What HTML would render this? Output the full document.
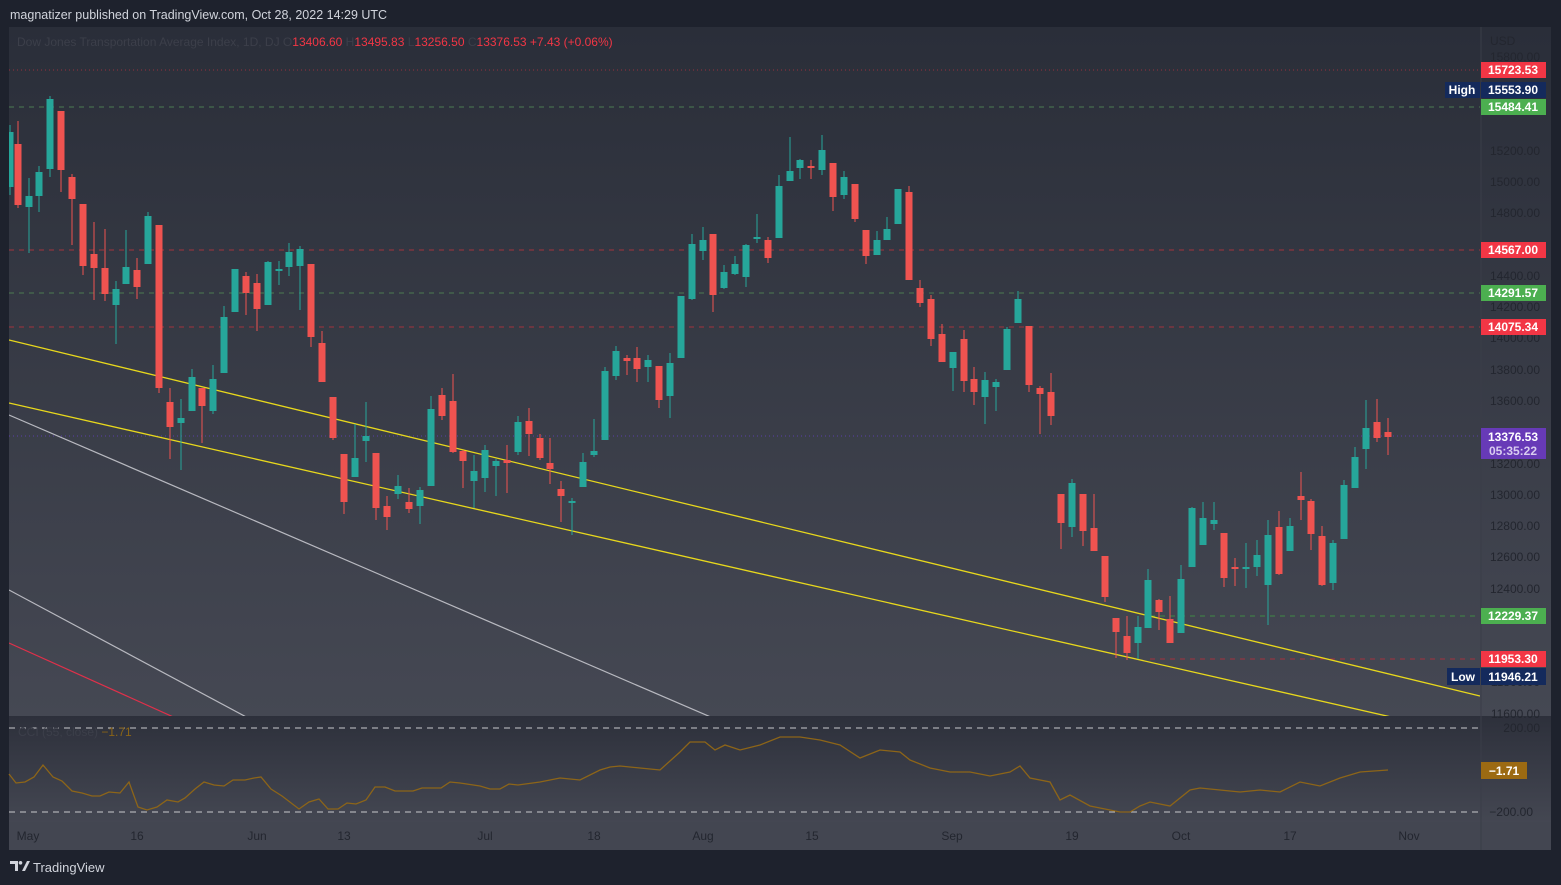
<!DOCTYPE html>
<html><head><meta charset="utf-8"><style>
html,body{margin:0;padding:0;background:#1e222d;width:1561px;height:885px;overflow:hidden;font-family:"Liberation Sans",sans-serif}
svg{position:absolute;left:0;top:0}
</style></head><body>
<svg id="s" width="1561" height="885" xmlns="http://www.w3.org/2000/svg" font-family="Liberation Sans, sans-serif">
<defs>
<linearGradient id="g1" x1="0" y1="0" x2="0" y2="1"><stop offset="0" stop-color="#2a2e39"/><stop offset="1" stop-color="#454853"/></linearGradient>
<linearGradient id="g2" x1="0" y1="0" x2="0" y2="1"><stop offset="0" stop-color="#2d303b"/><stop offset="1" stop-color="#444752"/></linearGradient>
<clipPath id="cp"><rect x="9" y="27" width="1471" height="689"/></clipPath>
</defs>
<rect x="0" y="0" width="1561" height="885" fill="#1e222d"/>
<rect x="9" y="27" width="1542" height="689" fill="url(#g1)"/>
<rect x="9" y="716" width="1542" height="107" fill="url(#g2)"/>
<rect x="9" y="822" width="1542" height="28" fill="#434651"/>
<line x1="1481" y1="27" x2="1481" y2="850" stroke="#3a3d48" stroke-width="1"/>
<text x="10" y="19" font-size="12.5" fill="#d1d4dc">magnatizer published on TradingView.com, Oct 28, 2022 14:29 UTC</text>
<text x="17" y="46" font-size="12" fill="#3c3f4a">Dow Jones Transportation Average Index, 1D, DJ  <tspan fill="#3c3f4a">O</tspan><tspan fill="#f23645">13406.60</tspan>  <tspan fill="#3c3f4a">H</tspan><tspan fill="#f23645">13495.83</tspan>  <tspan fill="#3c3f4a">L</tspan><tspan fill="#f23645">13256.50</tspan>  <tspan fill="#3c3f4a">C</tspan><tspan fill="#f23645">13376.53</tspan>  <tspan fill="#f23645">+7.43 (+0.06%)</tspan></text>
<g id="axis" font-size="12" fill="#23262f" text-anchor="end"></g>
<g clip-path="url(#cp)" id="chart">
<line x1="9" y1="70" x2="1480" y2="70" stroke="#b2313f" stroke-dasharray="1,3" opacity=".8"/>
<line x1="9" y1="107" x2="1480" y2="107" stroke="#4c7a52" stroke-dasharray="5,5"/>
<line x1="9" y1="250" x2="1480" y2="250" stroke="#a3333d" stroke-dasharray="5,5"/>
<line x1="9" y1="293" x2="1480" y2="293" stroke="#4c7a52" stroke-dasharray="5,5"/>
<line x1="9" y1="327" x2="1480" y2="327" stroke="#a3333d" stroke-dasharray="5,5"/>
<line x1="9" y1="436" x2="1480" y2="436" stroke="#5b3fa8" stroke-dasharray="1,3"/>
<line x1="1150" y1="616" x2="1480" y2="616" stroke="#3f8a45" stroke-dasharray="5,5"/>
<line x1="1150" y1="659" x2="1480" y2="659" stroke="#a3333d" stroke-dasharray="5,5"/>
<line x1="9" y1="340" x2="1480" y2="696" stroke="#e8d81c" stroke-width="1.3"/>
<line x1="9" y1="403" x2="1400" y2="719" stroke="#e8d81c" stroke-width="1.3"/>
<line x1="9" y1="415" x2="720" y2="721" stroke="#b8b9c0" stroke-width="1.2"/>
<line x1="9" y1="590" x2="250" y2="719" stroke="#b8b9c0" stroke-width="1.2"/>
<line x1="9" y1="643" x2="180" y2="720" stroke="#e0304a" stroke-width="1.2"/>
<g id="candles"></g>
</g>
<line x1="9" y1="728" x2="1480" y2="728" stroke="#c8c9cd" stroke-dasharray="6,5"/>
<line x1="9" y1="812" x2="1480" y2="812" stroke="#c8c9cd" stroke-dasharray="6,5"/>
<text x="18" y="736" font-size="12" fill="#3c3f4a">CCI (55, close)  <tspan fill="#8a6417">−1.71</tspan></text>
<polyline id="cci" fill="none" stroke="#8d6518" stroke-width="1.3"/>
<text x="1540" y="732" font-size="12" fill="#23262f" text-anchor="end">200.00</text>
<text x="1533" y="816" font-size="12" fill="#23262f" text-anchor="end">−200.00</text>
<rect x="1481" y="762" width="46" height="17" fill="#9c6a12"/>
<text x="1504" y="775" font-size="12" fill="#fff" text-anchor="middle" font-weight="bold">−1.71</text>
<g font-size="12" fill="#23262f" text-anchor="middle">
<text x="28" y="840">May</text><text x="137" y="840">16</text><text x="257" y="840">Jun</text><text x="344" y="840">13</text><text x="485" y="840">Jul</text><text x="594" y="840">18</text><text x="703" y="840">Aug</text><text x="812" y="840">15</text><text x="952" y="840">Sep</text><text x="1072" y="840">19</text><text x="1181" y="840">Oct</text><text x="1290" y="840">17</text><text x="1409" y="840">Nov</text>
</g>
<text x="1490" y="45" font-size="12" fill="#23262f">USD</text>
<g font-size="12" font-weight="bold" fill="#fff" text-anchor="middle">
<rect x="1481" y="62" width="65" height="16" fill="#f23645"/><text x="1513" y="74">15723.53</text>
<rect x="1445" y="82" width="35" height="16" fill="#142a5c"/><text x="1462" y="94">High</text>
<rect x="1481" y="82" width="65" height="16" fill="#142a5c"/><text x="1513" y="94">15553.90</text>
<rect x="1481" y="99" width="65" height="16" fill="#4caf50"/><text x="1513" y="111">15484.41</text>
<rect x="1481" y="242" width="65" height="16" fill="#f23645"/><text x="1513" y="254">14567.00</text>
<rect x="1481" y="285" width="65" height="16" fill="#4caf50"/><text x="1513" y="297">14291.57</text>
<rect x="1481" y="319" width="65" height="16" fill="#f23645"/><text x="1513" y="331">14075.34</text>
<rect x="1481" y="428" width="65" height="31" fill="#673ab7"/><text x="1513" y="441">13376.53</text><text x="1513" y="455" fill="#d9cdf0">05:35:22</text>
<rect x="1481" y="608" width="65" height="16" fill="#4caf50"/><text x="1513" y="620">12229.37</text>
<rect x="1481" y="651" width="65" height="16" fill="#f23645"/><text x="1513" y="663">11953.30</text>
<rect x="1447" y="668" width="33" height="17" fill="#142a5c"/><text x="1463" y="681">Low</text>
<rect x="1481" y="668" width="65" height="17" fill="#142a5c"/><text x="1513" y="681">11946.21</text>
</g>
<g transform="translate(10,861)" fill="#d1d4dc">
<path d="M0 0h8v10h-3v-7h-5z"/><rect x="0" y="0" width="8" height="3"/><circle cx="10.5" cy="1.8" r="1.8"/><path d="M12 10l5-10h3l-5 10z"/>
</g>
<text x="33" y="872" font-size="13" fill="#d1d4dc">TradingView</text>
</svg>
<script>
var ns="http://www.w3.org/2000/svg";
function el(p,t,a){var e=document.createElementNS(ns,t);for(var k in a)e.setAttribute(k,a[k]);p.appendChild(e);return e;}
var ax=document.getElementById('axis');
[[15800,57],[15200,151],[15000,182],[14800,213],[14400,276],[14200,307],[14000,338],[13800,370],[13600,401],[13200,464],[13000,495],[12800,526],[12600,557],[12400,589],[11800,682],[11600,714]].forEach(function(a){var t=el(ax,'text',{x:1540,y:a[1]+4});t.textContent=a[0].toFixed(2);});
var C=[[10,'g',132,187,125,195],[18,'r',144,205,121,208],[29,'g',196,207,178,253],[39,'g',172,196,166,212],[50,'g',99,169,96,177],[61,'r',111,170,111,192],[72,'r',177,199,174,245],[83,'r',204,266,204,275],[94,'r',254,268,222,300],[105,'r',268,294,229,301],[116,'g',289,305,281,344],[126,'g',267,284,230,284],[137,'r',270,287,258,299],[148,'g',216,264,212,264],[159,'r',225,388,225,393],[170,'r',402,427,388,459],[181,'g',418,423,399,470],[192,'g',377,411,369,411],[202,'r',388,406,388,443],[213,'g',379,411,365,414],[224,'g',317,373,306,373],[235,'g',269,312,269,312],[246,'r',276,293,272,315],[257,'r',283,309,274,331],[268,'g',262,305,261,305],[279,'g',269,271,261,285],[289,'g',252,267,243,276],[300,'g',249,266,246,310],[311,'r',264,337,264,347],[322,'r',343,382,331,382],[333,'r',397,438,397,440],[344,'r',454,502,454,514],[355,'g',458,477,424,477],[366,'g',436,441,402,462],[376,'r',453,508,453,520],[387,'r',506,517,496,530],[398,'g',486,494,475,499],[409,'r',502,509,488,513],[420,'g',490,506,487,524],[431,'g',409,486,396,486],[442,'r',395,416,388,420],[453,'r',401,452,374,453],[463,'r',451,461,450,488],[474,'g',471,481,455,508],[485,'g',450,478,445,492],[496,'g',461,466,459,496],[507,'r',460,463,445,493],[518,'g',422,452,416,455],[529,'r',421,434,408,456],[540,'r',438,458,434,460],[550,'r',463,469,438,484],[561,'r',489,496,481,522],[572,'g',501,503,498,535],[583,'g',462,487,453,487],[594,'g',451,455,419,457],[605,'g',371,440,367,440],[616,'g',351,376,346,380],[627,'r',358,361,355,375],[637,'r',358,369,347,382],[648,'g',360,367,355,382],[659,'r',366,400,366,408],[670,'g',363,396,353,418],[681,'g',296,358,296,358],[692,'g',244,299,234,300],[703,'g',240,251,227,260],[713,'r',234,295,234,312],[724,'g',272,288,265,289],[735,'g',264,274,256,275],[746,'g',245,277,244,287],[757,'g',237,238,214,243],[768,'r',240,258,237,263],[779,'g',186,238,175,238],[790,'g',171,181,137,181],[800,'g',160,168,159,179],[811,'r',166,168,160,179],[822,'g',150,170,135,175],[833,'r',163,197,163,211],[844,'g',177,195,171,199],[855,'r',184,219,184,222],[866,'r',230,256,230,264],[877,'g',240,255,231,255],[887,'g',229,240,217,240],[898,'g',189,224,189,224],[909,'r',192,280,186,280],[920,'r',288,303,280,307],[931,'r',299,339,295,346],[942,'r',334,362,324,362],[953,'g',352,368,352,391],[964,'r',339,381,330,392],[974,'r',379,392,367,405],[985,'g',380,397,372,424],[996,'g',382,387,379,411],[1007,'g',329,370,327,370],[1018,'g',299,323,291,323],[1029,'r',326,385,326,392],[1040,'r',388,394,386,434],[1051,'r',392,416,373,425],[1061,'r',494,523,494,549],[1072,'g',483,527,479,537],[1083,'r',494,531,494,546],[1094,'r',528,551,494,551],[1105,'r',556,597,556,602],[1116,'r',618,632,618,658],[1127,'r',636,653,616,660],[1138,'g',627,643,616,659],[1148,'g',580,628,569,628],[1159,'r',600,612,599,630],[1170,'r',619,643,596,643],[1181,'g',579,633,565,633],[1192,'g',508,567,507,567],[1203,'g',518,545,502,545],[1214,'g',520,524,502,530],[1224,'r',533,578,533,587],[1235,'r',567,569,558,586],[1246,'g',567,569,543,588],[1257,'g',555,567,540,576],[1268,'g',535,585,520,625],[1279,'r',527,574,511,575],[1290,'g',526,551,518,551],[1301,'r',496,500,472,520],[1311,'r',501,534,499,550],[1322,'r',536,585,526,586],[1333,'g',543,583,540,590],[1344,'g',485,539,480,539],[1355,'g',457,488,447,488],[1366,'g',428,449,400,469],[1377,'r',422,438,399,442],[1388,'r',432,437,418,455]];
var cg=document.getElementById('candles');
C.forEach(function(c){var col=c[1]=='g'?'#26a69a':'#ef5350';
el(cg,'rect',{x:c[0]-0.5,y:c[4],width:1,height:c[5]-c[4],fill:col});
el(cg,'rect',{x:c[0]-3.5,y:c[2],width:7,height:Math.max(2,c[3]-c[2]),fill:col});});
var P=[[9,774],[16,783],[25,782],[34,777],[43,765],[53,777],[62,781],[72,791],[82,793],[92,796],[100,796],[109,792],[120,793],[129,782],[138,807],[147,810],[157,807],[167,800],[178,802],[185,798],[195,789],[204,782],[214,785],[224,786],[233,780],[245,780],[254,778],[261,777],[271,789],[282,796],[299,809],[309,802],[319,799],[328,809],[338,809],[347,803],[356,804],[366,800],[375,787],[385,787],[395,791],[413,791],[422,788],[441,788],[450,782],[460,783],[480,786],[490,789],[500,789],[509,784],[518,785],[540,782],[560,778],[580,780],[600,770],[610,767],[620,766],[640,768],[660,770],[680,752],[690,742],[705,742],[715,750],[725,745],[740,750],[760,745],[780,737],[800,737],[820,740],[840,745],[860,758],[880,750],[900,752],[910,760],[930,768],[950,772],[970,772],[990,776],[1010,772],[1020,766],[1030,778],[1050,782],[1060,800],[1070,795],[1090,806],[1100,808],[1120,812],[1130,812],[1140,806],[1150,802],[1170,806],[1190,790],[1200,788],[1220,790],[1240,792],[1260,790],[1280,792],[1300,782],[1320,786],[1340,778],[1360,772],[1388,770]];
document.getElementById('cci').setAttribute('points',P.map(function(p){return p.join(',')}).join(' '));
</script>
</body></html>
